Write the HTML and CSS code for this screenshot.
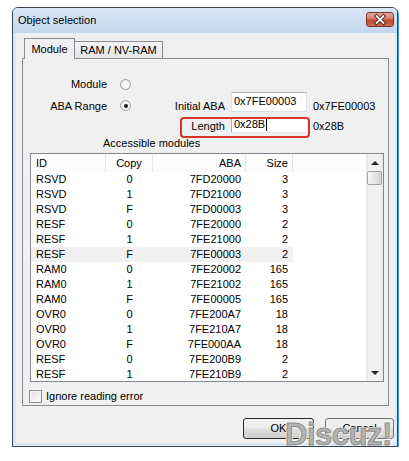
FILE: index.html
```html
<!DOCTYPE html>
<html>
<head>
<meta charset="utf-8">
<title>Object selection</title>
<link rel="stylesheet" href="styles.css">
</head>
<body>
<div class="window">
  <div class="titlebar">
    <span class="title">Object selection</span>
    <span class="close">
      <svg width="26" height="13" viewBox="0 0 26 13">
        <path d="M9.5 3 L16.5 10 M16.5 3 L9.5 10" stroke="#4a1d16" stroke-width="3.6" stroke-linecap="square" fill="none"/>
        <path d="M9.5 3 L16.5 10 M16.5 3 L9.5 10" stroke="#ffffff" stroke-width="1.8" stroke-linecap="square" fill="none"/>
      </svg>
    </span>
  </div>
  <div class="client">
    <div class="tabs">
      <div class="tab active">Module</div>
      <div class="tab">RAM / NV-RAM</div>
    </div>
    <div class="panel">
      <div class="row row-a">
        <span class="lbl-left">Module</span>
        <span class="radio"></span>
      </div>
      <div class="row row-b">
        <span class="lbl-left">ABA Range</span>
        <span class="radio checked"></span>
        <span class="lbl-mid">Initial ABA</span>
        <div class="field">0x7FE00003</div>
        <span class="val">0x7FE00003</span>
      </div>
      <div class="row row-c">
        <div class="highlight">
          <span class="lbl-len">Length</span>
          <div class="field field-len">0x28B<span class="caret"></span></div>
        </div>
        <span class="val val-len">0x28B</span>
      </div>
      <div class="caption">Accessible modules</div>
      <div class="listview">
        <div class="lv-main">
          <div class="lv-head">
            <span class="c-id">ID</span>
            <span class="c-copy">Copy</span>
            <span class="c-aba">ABA</span>
            <span class="c-size">Size</span>
          </div>
          <div class="lv-row"><span class="c-id">RSVD</span><span class="c-copy">0</span><span class="c-aba">7FD20000</span><span class="c-size">3</span></div>
          <div class="lv-row"><span class="c-id">RSVD</span><span class="c-copy">1</span><span class="c-aba">7FD21000</span><span class="c-size">3</span></div>
          <div class="lv-row"><span class="c-id">RSVD</span><span class="c-copy">F</span><span class="c-aba">7FD00003</span><span class="c-size">3</span></div>
          <div class="lv-row"><span class="c-id">RESF</span><span class="c-copy">0</span><span class="c-aba">7FE20000</span><span class="c-size">2</span></div>
          <div class="lv-row"><span class="c-id">RESF</span><span class="c-copy">1</span><span class="c-aba">7FE21000</span><span class="c-size">2</span></div>
          <div class="lv-row hover"><span class="c-id">RESF</span><span class="c-copy">F</span><span class="c-aba">7FE00003</span><span class="c-size">2</span></div>
          <div class="lv-row"><span class="c-id">RAM0</span><span class="c-copy">0</span><span class="c-aba">7FE20002</span><span class="c-size">165</span></div>
          <div class="lv-row"><span class="c-id">RAM0</span><span class="c-copy">1</span><span class="c-aba">7FE21002</span><span class="c-size">165</span></div>
          <div class="lv-row"><span class="c-id">RAM0</span><span class="c-copy">F</span><span class="c-aba">7FE00005</span><span class="c-size">165</span></div>
          <div class="lv-row"><span class="c-id">OVR0</span><span class="c-copy">0</span><span class="c-aba">7FE200A7</span><span class="c-size">18</span></div>
          <div class="lv-row"><span class="c-id">OVR0</span><span class="c-copy">1</span><span class="c-aba">7FE210A7</span><span class="c-size">18</span></div>
          <div class="lv-row"><span class="c-id">OVR0</span><span class="c-copy">F</span><span class="c-aba">7FE000AA</span><span class="c-size">18</span></div>
          <div class="lv-row"><span class="c-id">RESF</span><span class="c-copy">0</span><span class="c-aba">7FE200B9</span><span class="c-size">2</span></div>
          <div class="lv-row"><span class="c-id">RESF</span><span class="c-copy">1</span><span class="c-aba">7FE210B9</span><span class="c-size">2</span></div>
        </div>
        <div class="scrollbar">
          <div class="sb-btn"><span class="arrow-up"></span></div>
          <div class="sb-thumb"></div>
          <div class="sb-track"></div>
          <div class="sb-btn"><span class="arrow-down"></span></div>
        </div>
      </div>
      <div class="check-row">
        <span class="checkbox"></span>
        <span class="check-text">Ignore reading error</span>
      </div>
    </div>
    <div class="buttons">
      <div class="btn btn-ok">OK</div>
      <div class="btn btn-cancel">Cancel</div>
    </div>
  </div>
  <div class="watermark">Discuz!</div>
</div>
</body>
</html>
```

FILE: styles.css
```css
* { box-sizing: border-box; }
html, body { margin: 0; padding: 0; background: #ffffff; }
body {
  font-family: "Liberation Sans", Arial, sans-serif;
  font-size: 11px;
  color: #000;
}

.window {
  position: relative;
  margin: 7px 0 0 12px;
  width: 386px;
  height: 440px;
  border: 1px solid #3c4652;
  border-radius: 6px 6px 0 0;
  background: #dde7f3;
  box-shadow: 1px 1px 0 #3a9fd6;
  display: flex;
  flex-direction: column;
  padding: 0 2px 3px 3px;
}

.titlebar {
  margin: 0 -2px 0 -3px;
  height: 25px;
  flex: none;
  display: flex;
  align-items: flex-start;
  justify-content: space-between;
  border-radius: 5px 5px 0 0;
  background: linear-gradient(#dbe7f5, #c3d6ee);
}
.title {
  padding-left: 5px;
  line-height: 25px;
  font-size: 11px;
  color: #000;
}
.close {
  margin: 4px 3px 0 0;
  width: 28px;
  height: 15px;
  border: 1px solid #7a3128;
  border-radius: 3px;
  background: linear-gradient(#e7a89c 0%, #d47a68 45%, #c04a34 55%, #cf6a50 100%);
  display: flex;
  align-items: center;
  justify-content: center;
}
.close svg { display: block; }

.client {
  flex: 1;
  background: #f0f0f0;
  padding: 5px 6px 0 6px;
  display: flex;
  flex-direction: column;
}

.tabs {
  height: 20px;
  display: flex;
  align-items: flex-end;
  padding-left: 2px;
}
.tab {
  height: 17px;
  width: 89px;
  margin-left: -1px;
  border: 1px solid #898c95;
  border-bottom: none;
  background: linear-gradient(#f4f4f4, #e6e6e6);
  text-align: center;
  line-height: 16px;
}
.tab.active {
  position: relative;
  z-index: 1;
  width: 51px;
  height: 21px;
  margin-left: 0;
  margin-bottom: -1px;
  background: #f0f0f0;
  line-height: 21px;
}

.panel {
  height: 348px;
  border: 1px solid #898c95;
  background: #f0f0f0;
  padding-top: 17px;
}

.row { display: flex; }
.row-a { height: 16px; align-items: center; }
.lbl-left {
  width: 84px;
  text-align: right;
  line-height: 13px;
}
.radio {
  width: 11px;
  height: 11px;
  margin-left: 13px;
  border: 1px solid #9b9b9b;
  border-radius: 50%;
  background: radial-gradient(circle at 60% 60%, #ffffff 0%, #f2f2f2 55%, #d9d9d9 100%);
  display: flex;
  align-items: center;
  justify-content: center;
}
.radio.checked::after {
  content: "";
  width: 4px;
  height: 4px;
  border-radius: 50%;
  background: #1a1a1a;
}

.row-b { height: 20px; align-items: flex-start; }
.row-b .lbl-left { margin-top: 8px; }
.row-b .radio { margin-top: 8px; }
.lbl-mid {
  width: 94px;
  text-align: right;
  margin-top: 8px;
  line-height: 13px;
}
.field {
  margin-left: 6px;
  width: 76px;
  height: 20px;
  background: #fff;
  border: 1px solid #dbdfe6;
  border-top-color: #abadb3;
  border-left-color: #e2e3ea;
  padding: 2px 2px 0 2px;
  line-height: 13px;
}
.val {
  margin-left: 6px;
  margin-top: 8px;
  line-height: 13px;
}

.row-c {
  margin-top: 5px;
  margin-left: 157px;
  align-items: flex-start;
}
.highlight {
  width: 130px;
  height: 21px;
  border: 2px solid #d8352b;
  border-radius: 4px;
  display: flex;
  align-items: flex-start;
}
.lbl-len {
  width: 43px;
  text-align: right;
  line-height: 15px;
}
.field-len {
  height: 14px;
  border: none;
  border-left: 1px solid #abadb3;
  border-bottom: 1px solid #e3e9ef;
  padding: 0 2px;
  line-height: 11px;
  display: flex;
  align-items: flex-start;
}
.caret {
  display: inline-block;
  width: 1px;
  height: 12px;
  background: #000;
  margin-left: 1px;
}
.val-len { margin-left: 3px; margin-top: 3px; }

.caption {
  margin-left: 80px;
  height: 15px;
  line-height: 11px;
}

.listview {
  margin-left: 7px;
  width: 354px;
  height: 229px;
  border: 1px solid #828790;
  background: #fff;
  display: flex;
  overflow: hidden;
}
.lv-main {
  flex: 1;
  overflow: hidden;
}
.lv-head {
  height: 18px;
  display: flex;
  line-height: 18px;
  background: linear-gradient(#ffffff, #fbfbfc);
}
.lv-head span {
  border-right: 1px solid #e3e6ea;
}
.lv-head .c-aba, .lv-head .c-size { padding-right: 4px; }

.c-id { width: 75px; padding-left: 5px; flex: none; }
.c-copy { width: 47px; text-align: center; flex: none; }
.c-aba { width: 93px; text-align: right; padding-right: 5px; flex: none; }
.c-size { width: 47px; text-align: right; padding-right: 5px; flex: none; }

.lv-row {
  width: 262px;
  height: 15px;
  line-height: 15px;
  display: flex;
}
.lv-row.hover { background: #f1f1f1; }

.scrollbar {
  width: 17px;
  flex: none;
  display: flex;
  flex-direction: column;
  background: linear-gradient(to right, #e4e4e4, #f1f1f1 20%, #f1f1f1 80%, #e8e8e8);
}
.sb-btn {
  height: 17px;
  flex: none;
  display: flex;
  align-items: center;
  justify-content: center;
}
.arrow-up {
  width: 0; height: 0;
  border-left: 4px solid transparent;
  border-right: 4px solid transparent;
  border-bottom: 4px solid #222;
}
.arrow-down {
  width: 0; height: 0;
  border-left: 4px solid transparent;
  border-right: 4px solid transparent;
  border-top: 4px solid #222;
}
.sb-thumb {
  height: 14px;
  margin: 0 1px;
  flex: none;
  border: 1px solid #a3a3a3;
  border-radius: 2px;
  background: linear-gradient(to right, #f6f6f6, #e6e6e6 50%, #d4d4d4);
}
.sb-track { flex: 1; }

.check-row {
  margin-top: 8px;
  margin-left: 6px;
  display: flex;
  align-items: center;
  height: 13px;
}
.checkbox {
  width: 13px;
  height: 13px;
  border: 1px solid #8e8f8f;
  background: linear-gradient(135deg, #e4e4e4, #fbfbfb);
  box-shadow: inset 0 0 0 1px #f4f4f4;
}
.check-text { margin-left: 4px; line-height: 13px; }

.buttons {
  margin-top: 12px;
  margin-right: -5px;
  display: flex;
  justify-content: flex-end;
  gap: 11px;
}
.btn {
  height: 21px;
  border: 1px solid #707070;
  border-radius: 3px;
  background: linear-gradient(#f2f2f2 0%, #ebebeb 48%, #dddddd 52%, #cfcfcf 100%);
  text-align: center;
  line-height: 19px;
}
.btn-ok { width: 71px; border-color: #2a2a2a; }
.btn-cancel { width: 69px; }

.watermark {
  position: absolute;
  left: 272px;
  top: 411px;
  font-family: "Liberation Sans", Arial, sans-serif;
  font-weight: bold;
  font-size: 31px;
  line-height: 1;
  letter-spacing: -0.5px;
  color: #b3b3b3;
  -webkit-text-stroke: 1px #8f8f8f;
  text-shadow: 1px 1px 0 #ffffff, -1px -1px 0 #ffffff;
}
```
